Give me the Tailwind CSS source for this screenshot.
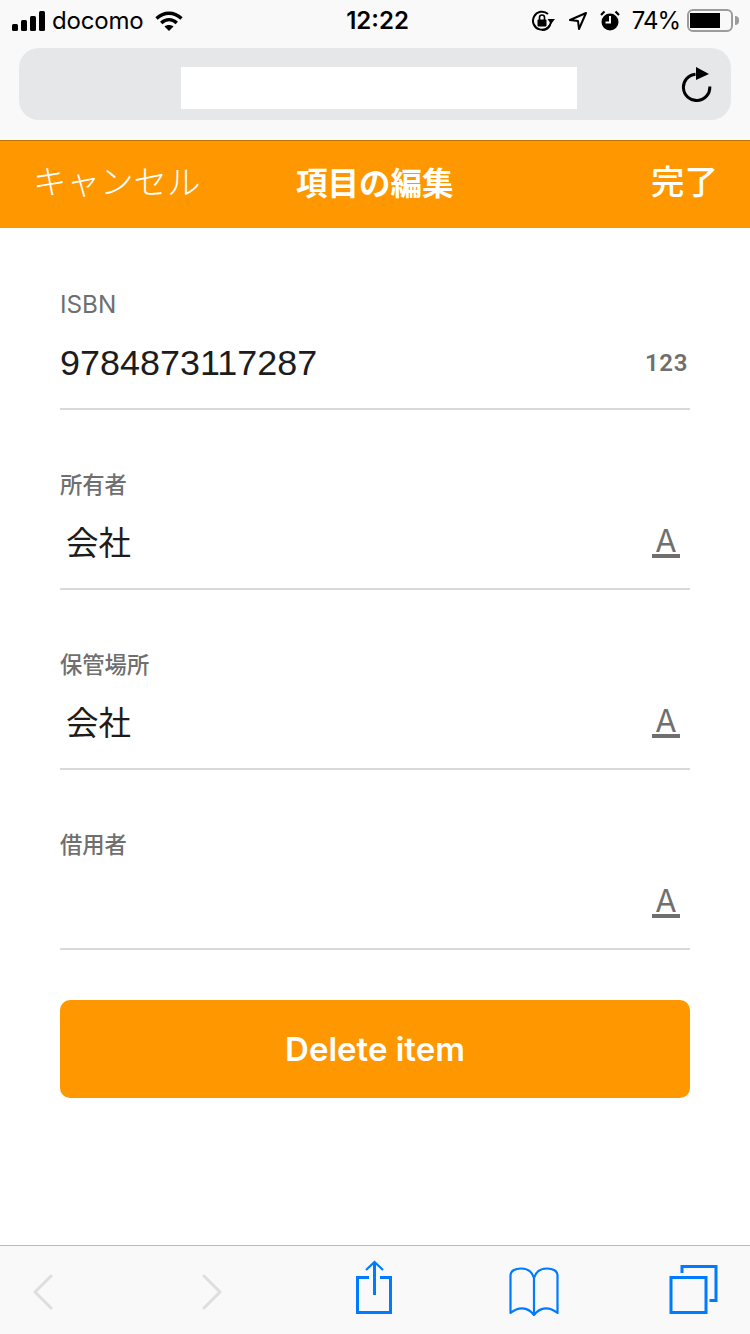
<!DOCTYPE html>
<html lang="ja">
<head>
  <meta charset="UTF-8" />
  <meta name="viewport" content="width=device-width, initial-scale=1" />
  <title>項目の編集</title>
  <script src="https://cdn.jsdelivr.net/npm/@tailwindcss/browser@4"></script>
</head>
<body class="bg-white font-['Inter','Noto_Sans_CJK_JP',sans-serif]">
<div class="w-[750px] h-[1334px] flex flex-col overflow-hidden">

  <!-- Browser chrome -->
  <div class="h-[140px] bg-[#f9f9f9] flex flex-col">
    <div class="h-[40px] pt-[1px] pl-[12px] pr-[11px] flex items-center text-black">
      <div class="flex-1 flex items-center">
        <svg width="33" height="20" viewBox="0 0 33 20" class="fill-black">
          <rect x="0" y="13" width="6" height="7" rx="1.5"/>
          <rect x="9" y="9" width="6" height="11" rx="1.5"/>
          <rect x="18" y="5" width="6" height="15" rx="1.5"/>
          <rect x="27" y="0" width="6" height="20" rx="1.5"/>
        </svg>
        <span class="ml-[7px] text-[24px] leading-none tracking-[-0.2px]">docomo</span>
        <svg width="28" height="20" viewBox="0 0 28 20" class="ml-[12px]" fill="none" stroke="black" stroke-width="3.4">
          <path d="M1.500 7.500 C9 0.500 19 0.500 26.500 7.500"/>
          <path d="M6.200 12 C11 7.600 17 7.600 21.800 12"/>
          <path d="M14 20 L9.500 15.500 C12 13.500 16 13.500 18.500 15.500 Z" fill="black" stroke="none"/>
        </svg>
      </div>
      <span class="ml-[4px] text-[24px] font-semibold leading-none">12:22</span>
      <div class="flex-1 flex items-center justify-end">
        <svg width="24" height="22" viewBox="0 0 24 22" fill="none" stroke="black" stroke-width="2">
          <path d="M20 11 A9 9 0 1 1 17 4"/>
          <path d="M19 15 A9 9 0 0 1 11 20" />
          <path d="M24 9 L20 14 L16.500 9 Z" fill="black" stroke="none"/>
          <rect x="6.500" y="9.500" width="9" height="7" rx="1" fill="black" stroke="none"/>
          <path d="M8.500 10 V7.500 A2.500 2.500 0 0 1 13.500 7.500 V10" stroke-width="1.600"/>
        </svg>
        <svg width="20" height="20" viewBox="0 0 20 20" class="ml-[13px]" fill="none" stroke="black" stroke-width="2" stroke-linejoin="round">
          <path d="M18 2 L2 9 L10 10 L11 18 Z"/>
        </svg>
        <svg width="20" height="22" viewBox="0 0 20 22" class="ml-[12px]">
          <circle cx="10" cy="12" r="8.500" fill="black"/>
          <path d="M10 6 V12.500 H5.500" fill="none" stroke="#f9f9f9" stroke-width="2"/>
          <path d="M1 5 L4.500 1.500 M19 5 L15.500 1.500" stroke="black" stroke-width="2.200"/>
        </svg>
        <span class="ml-[12px] text-[24px] leading-none tracking-[-1px]">74%</span>
        <div class="ml-[7px] w-[46px] h-[23px] border-2 border-[#9c9c9c] rounded-[6px] py-[2px] pl-[1px]">
          <div class="w-[30px] h-full bg-black"></div>
        </div>
        <div class="ml-[2px] w-[4px] h-[9px] bg-[#9c9c9c] rounded-r-full"></div>
      </div>
    </div>

    <div class="mt-[8px] mx-[19px] h-[72px] bg-[#e6e7e9] rounded-[20px] relative flex items-center justify-center">
      <div class="ml-[7px] mt-[8px] w-[396px] h-[42px] bg-white"></div>
      <svg width="32" height="36" viewBox="0 0 32 36" class="absolute right-[18px] top-[18px]" fill="none" stroke="black" stroke-width="3">
        <path d="M14.500 8.200 A13.200 13.200 0 1 0 28.800 20.500"/>
        <path d="M15 1 L28 8 L15 14 Z" fill="black" stroke="none"/>
      </svg>
    </div>
  </div>

  <!-- Header -->
  <div class="h-[88px] bg-[#ff9800] border-t border-[#c27400] relative flex items-center justify-between pl-[33px] pr-[32px] text-white">
    <span class="text-[33.500px] font-light leading-none -mt-[4px]">キャンセル</span>
    <span class="absolute left-[296px] top-[27px] text-[31.500px] font-bold leading-none">項目の編集</span>
    <span class="text-[33.500px] font-medium leading-none -mt-[3px]">完了</span>
  </div>

  <!-- Form -->
  <div class="flex-1 px-[60px] pt-[62px] flex flex-col">
    <div class="border-b-2 border-[#d9d9d9]">
      <div class="h-[28px] flex items-center text-[24.300px] text-[#6f6f6f] leading-none">ISBN</div>
      <div class="h-[90px] flex items-center justify-between">
        <span class="text-[35.950px] leading-none text-[#1c1c1c] font-['Liberation_Sans',sans-serif]">9784873117287</span>
        <span class="mr-[2px] text-[24px] font-semibold leading-none text-[#6f6f6f] font-['Roboto',sans-serif] tracking-[0.6px]">123</span>
      </div>
    </div>

    <div class="mt-[60px] border-b-2 border-[#d9d9d9]">
      <div class="h-[28px] pt-[2px] flex items-center text-[22.300px] font-medium text-[#6f6f6f] leading-none">所有者</div>
      <div class="h-[90px] pt-[3px] flex items-center justify-between">
        <span class="ml-[6px] text-[32.500px] leading-none text-[#1c1c1c]">会社</span>
        <div class="-mt-[3px] mr-[10px] w-[28px] flex flex-col items-center text-[#6f6f6f]">
          <span class="text-[31px] leading-[26px]">A</span>
          <div class="w-full h-[4px] bg-[#6f6f6f]"></div>
        </div>
      </div>
    </div>

    <div class="mt-[60px] border-b-2 border-[#d9d9d9]">
      <div class="h-[28px] pt-[2px] flex items-center text-[22.300px] font-medium text-[#6f6f6f] leading-none">保管場所</div>
      <div class="h-[90px] pt-[3px] flex items-center justify-between">
        <span class="ml-[6px] text-[32.500px] leading-none text-[#1c1c1c]">会社</span>
        <div class="-mt-[3px] mr-[10px] w-[28px] flex flex-col items-center text-[#6f6f6f]">
          <span class="text-[31px] leading-[26px]">A</span>
          <div class="w-full h-[4px] bg-[#6f6f6f]"></div>
        </div>
      </div>
    </div>

    <div class="mt-[60px] border-b-2 border-[#d9d9d9]">
      <div class="h-[28px] pt-[2px] flex items-center text-[22.300px] font-medium text-[#6f6f6f] leading-none">借用者</div>
      <div class="h-[90px] flex items-center justify-end">
        <div class="mr-[10px] w-[28px] flex flex-col items-center text-[#6f6f6f]">
          <span class="text-[31px] leading-[26px]">A</span>
          <div class="w-full h-[4px] bg-[#6f6f6f]"></div>
        </div>
      </div>
    </div>

    <button type="button" class="mt-[50px] h-[98px] rounded-[10px] bg-[#ff9800] text-white text-[33px] font-semibold leading-none">Delete item</button>
  </div>

  <!-- Safari toolbar -->
  <div class="h-[89px] bg-[#f9f9f9] border-t border-[#b8b8b8] relative">
    <svg width="750" height="88" viewBox="0 0 750 88" fill="none" class="block">
      <g stroke="#dedede" stroke-width="3" stroke-linecap="round" stroke-linejoin="round">
        <path d="M51 30 L35 46 L51 62"/>
        <path d="M204 30 L220 46 L204 62"/>
      </g>
      <g stroke="#007aff" stroke-width="3">
        <path d="M369 31.500 H357.500 V66.500 H390.500 V31.500 H380"/>
        <path d="M374.500 16 V49"/>
        <path d="M366 24 L374.500 16 L383 24" stroke-width="2.200"/>
        <path d="M534 32 C532 25 527 22.500 521 22.500 C515 22.500 510.500 25 510.500 29 V67 C518 61 527 60 534 69 C541 60 550 61 557.500 67 V29 C557.500 25 553 22.500 547 22.500 C541 22.500 536 25 534 32 V69" stroke-width="2.200" stroke-linejoin="round"/>
        <rect x="671" y="31.500" width="35" height="35"/>
        <path d="M682 27 V20.500 H716 V54.500 H709.500"/>
      </g>
    </svg>
  </div>
</div>
</body>
</html>
